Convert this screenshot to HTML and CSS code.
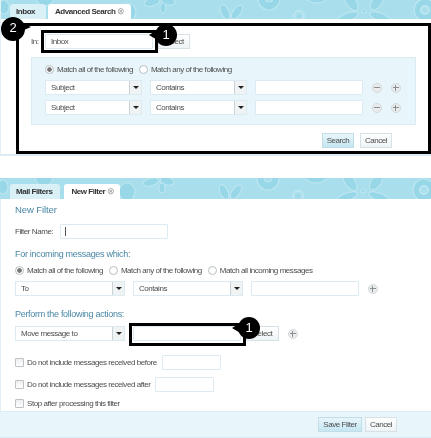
FILE: index.html
```html
<!DOCTYPE html>
<html lang="en">
<head>
    <meta charset="UTF-8">
    <meta name="viewport" content="width=device-width, initial-scale=1.0">
    <title>Advanced Search and New Filter</title>
    <link rel="stylesheet" href="styles.css">
</head>
<body>
    <svg class="defs" width="0" height="0">
        <defs>
            <g id="flowers" fill="#98d7e7" stroke="#bce6f0" stroke-width="1.2">
                <ellipse cx="3" cy="9" rx="5" ry="7" />
                <circle cx="44" cy="-1" r="9" />
                <ellipse cx="127" cy="14" rx="8" ry="9" />
                <ellipse cx="151" cy="4" rx="8" ry="4" transform="rotate(-15 151 4)" />
                <ellipse cx="167" cy="3" rx="7" ry="4" transform="rotate(15 167 3)" />
                <ellipse cx="162" cy="10" rx="3" ry="5" />
                <ellipse cx="224" cy="14" rx="4" ry="8" transform="rotate(-25 224 14)" />
                <ellipse cx="236" cy="14" rx="4" ry="8" transform="rotate(35 236 14)" />
                <circle cx="268" cy="1" r="11" />
                <circle cx="268" cy="0" r="4" fill="#a9deec" />
                <circle cx="298" cy="18" r="5" fill="none" stroke-width="2" />
                <circle cx="298" cy="18" r="1.5" stroke="none" />
                <ellipse cx="316" cy="-2" rx="11" ry="7" />
                <ellipse cx="350" cy="4" rx="5" ry="10" transform="rotate(-35 350 4)" />
                <ellipse cx="376" cy="4" rx="5" ry="9" transform="rotate(35 376 4)" />
                <ellipse cx="347" cy="19" rx="11" ry="4" transform="rotate(-20 347 19)" />
                <ellipse cx="379" cy="19" rx="11" ry="4" transform="rotate(20 379 19)" />
                <circle cx="363" cy="13" r="2" />
                <circle cx="424" cy="12" r="11" />
                <circle cx="424" cy="12" r="4" fill="#a9deec" stroke-width="2" />
            </g>
        </defs>
    </svg>

    <section class="panel panel-search">
        <div class="tabbar">
            <svg class="flowers" width="431" height="21"><use href="#flowers" /></svg>
            <div class="tab tab-inbox">Inbox</div>
            <div class="tab active">Advanced Search <span class="tab-close">&#8855;</span></div>
        </div>
        <div class="search-body">
            <div class="row folder-row">
                <label class="in-label">In:</label>
                <div class="field field-folder">Inbox</div>
                <button class="btn">Select</button>
            </div>
            <div class="match-box">
                <div class="row radios">
                    <span class="radio on"></span><span>Match all of the following</span>
                    <span class="radio"></span><span>Match any of the following</span>
                </div>
                <div class="row cond">
                    <div class="select sel-sm"><span>Subject</span><i></i></div>
                    <div class="select sel-sm"><span>Contains</span><i></i></div>
                    <div class="field field-value"></div>
                    <span class="round minus"></span>
                    <span class="round plus"></span>
                </div>
                <div class="row cond">
                    <div class="select sel-sm"><span>Subject</span><i></i></div>
                    <div class="select sel-sm"><span>Contains</span><i></i></div>
                    <div class="field field-value"></div>
                    <span class="round minus"></span>
                    <span class="round plus"></span>
                </div>
            </div>
            <div class="row actions">
                <button class="btn primary">Search</button>
                <button class="btn">Cancel</button>
            </div>
        </div>

        <!-- annotations -->
        <div class="mark mark-all"></div>
        <div class="mark mark-in"></div>
        <div class="callout callout-2">2</div>
        <div class="callout callout-1a">1</div>
    </section>

    <section class="panel panel-filter">
        <div class="tabbar">
            <svg class="flowers" width="431" height="21"><use href="#flowers" /></svg>
            <div class="tab">Mail Filters</div>
            <div class="tab active">New Filter <span class="tab-close">&#8855;</span></div>
        </div>
        <div class="filter-body">
            <h3>New Filter</h3>
            <div class="row name-row">
                <label>Filter Name:</label>
                <div class="field field-name"><b class="caret"></b></div>
            </div>
            <h4>For incoming messages which:</h4>
            <div class="row radios">
                <span class="radio on"></span><span>Match all of the following</span>
                <span class="radio"></span><span>Match any of the following</span>
                <span class="radio"></span><span>Match all incoming messages</span>
            </div>
            <div class="row cond">
                <div class="select sel-lg"><span>To</span><i></i></div>
                <div class="select sel-lg"><span>Contains</span><i></i></div>
                <div class="field field-value"></div>
                <span class="round plus"></span>
            </div>
            <h4 class="perform">Perform the following actions:</h4>
            <div class="row cond action-row">
                <div class="select sel-lg"><span>Move message to</span><i></i></div>
                <div class="field field-value"></div>
                <button class="btn btn-select">Select</button>
                <span class="round plus"></span>
            </div>
            <div class="row check-row first">
                <span class="check"></span><span>Do not include messages received before</span>
                <div class="field field-date"></div>
            </div>
            <div class="row check-row">
                <span class="check"></span><span>Do not include messages received after</span>
                <div class="field field-date"></div>
            </div>
            <div class="row check-row last">
                <span class="check"></span><span>Stop after processing this filter</span>
            </div>
        </div>
        <div class="footer">
            <button class="btn primary btn-save">Save Filter</button>
            <button class="btn">Cancel</button>
        </div>

        <!-- annotations -->
        <div class="mark mark-move"></div>
        <div class="callout callout-1b">1</div>
    </section>
</body>
</html>
```

FILE: styles.css
```css
* {
    margin: 0;
    padding: 0;
    box-sizing: border-box;
}

html {
    background: #fff;
}

/* the reference is a scaled down capture, so everything is a little soft */
body {
    width: 431px;
    height: 438px;
    overflow: hidden;
    background: #fff;
    font-family: "Liberation Sans", Arial, sans-serif;
    font-size: 8px;
    letter-spacing: -0.45px;
    color: #4d4d4d;
    filter: blur(0.3px);
}

.defs {
    position: absolute;
}

.panel {
    position: relative;
}

.panel-search {
    height: 156px;
    border-bottom: 2px solid #dcecf2;
    border-left: 1px solid #e3f1f6;
}

.panel-filter {
    margin-top: 22px;
    height: 260px;
}

.row {
    display: flex;
    align-items: center;
}

/* tabs */
.tabbar {
    position: relative;
    display: flex;
    align-items: flex-end;
    gap: 4px;
    height: 21px;
    padding-left: 10px;
    background: #a9deec;
    overflow: hidden;
}

.panel-search .tabbar {
    height: 19px;
    padding-left: 9px;
    gap: 2px;
}

.flowers {
    position: absolute;
    top: 0;
    left: 0;
}

.panel-search .flowers {
    top: -2px;
}

.tab {
    position: relative;
    height: 15px;
    padding: 0 8px 0 6px;
    line-height: 15px;
    font-weight: bold;
    color: #333;
    background: #d8f0f6;
    border-radius: 3px 3px 0 0;
}

.tab-inbox {
    width: 36px;
}

.tab.active {
    padding: 0 6px 0 7px;
    background: #fff;
}

.tab-close {
    font-size: 9px;
    font-weight: normal;
    color: #999;
}

/* inputs */
.field {
    height: 15px;
    padding-left: 5px;
    line-height: 13px;
    background: #fff;
    border: 1px solid #dcebf1;
    border-radius: 1px;
}

.field-folder {
    width: 108px;
}

.field-value {
    width: 108px;
}

.field-name {
    width: 108px;
    padding-left: 4px;
}

.field-date {
    width: 59px;
}

.caret {
    display: block;
    width: 1px;
    height: 9px;
    margin-top: 2px;
    background: #555;
}

.select {
    display: flex;
    justify-content: space-between;
    height: 15px;
    background: #fff;
    border: 1px solid #dcebf1;
    line-height: 13px;
}

.select span {
    padding-left: 5px;
}

.select i {
    position: relative;
    width: 12px;
    background: #f0f3f4;
    border-left: 1px solid #c9d2d6;
}

.select i::after {
    content: "";
    position: absolute;
    top: 5px;
    left: 3px;
    border: 3px solid transparent;
    border-top: 3px solid #222;
    border-bottom: 0;
}

.sel-sm {
    width: 97px;
}

.sel-lg {
    width: 110px;
}

.btn {
    width: 32px;
    height: 15px;
    font: 8px "Liberation Sans", Arial, sans-serif;
    letter-spacing: -0.45px;
    color: #4d4d4d;
    background: linear-gradient(#fff, #eef4f6);
    border: 1px solid #d8e2e6;
}

.btn.primary {
    background: linear-gradient(#e9f6fb, #c4e6f2);
    border-color: #c3dde7;
}

.btn-save {
    width: 44px;
}

.radio {
    width: 9px;
    height: 9px;
    margin-right: 3px;
    border: 1px solid #b7bec1;
    border-radius: 50%;
    background: #fff;
}

.radio.on {
    background: radial-gradient(circle, #777 0 2px, #fff 2.5px);
}

.radios > span:nth-child(n+3).radio {
    margin-left: 6px;
}

.check {
    width: 9px;
    height: 9px;
    margin-right: 3px;
    background: linear-gradient(#eee, #fff);
    border: 1px solid #bcc2c5;
    border-radius: 1px;
}

.round {
    position: relative;
    width: 10px;
    height: 10px;
    border: 1px solid #d6d9db;
    border-radius: 50%;
    background: #e9ebec;
}

.round::before,
.plus::after {
    content: "";
    position: absolute;
    top: 3px;
    left: 1px;
    width: 6px;
    height: 1px;
    background: #8a8f92;
}

.plus::after {
    top: 1px;
    left: 3px;
    width: 1px;
    height: 6px;
}

/* advanced search */
.search-body {
    padding: 15px 15px 0 30px;
}

.in-label {
    width: 14px;
}

.folder-row .btn {
    margin-left: 5px;
}

.match-box {
    margin-top: 8px;
    height: 68px;
    padding: 7px 13px;
    background: #e8f5fb;
    border: 1px solid #d9ecf3;
}

.match-box .cond {
    margin-top: 5px;
}

.match-box .radios {
    height: 9px;
    margin-bottom: 6px;
}

.match-box .select {
    margin-right: 8px;
}

.match-box .field-value {
    margin-right: 9px;
}

.match-box .minus {
    margin-right: 9px;
}

.actions {
    justify-content: flex-end;
    gap: 6px;
    margin-top: 8px;
    padding-right: 24px;
}

/* new filter */
.filter-body {
    height: 212px;
    padding: 5px 0 0 15px;
    box-shadow: inset 1px 0 0 #e3f1f6;
}

h3 {
    font-size: 9.5px;
    letter-spacing: -0.1px;
    line-height: 12px;
    color: #4a87a6;
    font-weight: normal;
}

h4 {
    margin-top: 9px;
    font-size: 9px;
    letter-spacing: -0.3px;
    line-height: 12px;
    color: #4a87a6;
    font-weight: normal;
}

.name-row {
    margin-top: 8px;
}

.name-row label {
    width: 45px;
}

.filter-body > .radios {
    margin-top: 6px;
}

.filter-body .cond {
    margin-top: 6px;
}

.filter-body .select {
    margin-right: 8px;
}

.filter-body .field-value {
    margin-right: 9px;
}

.perform {
    margin-top: 12px;
}

.action-row .field-value {
    margin-right: 5px;
}

.action-row .plus {
    margin-left: 9px;
}

.btn-select {
    width: 33px;
}

.check-row {
    margin-top: 7px;
}

.check-row.first {
    margin-top: 14px;
}

.check-row .field {
    margin-left: 5px;
}

.check-row.last {
    margin-top: 7px;
}

.footer {
    display: flex;
    justify-content: flex-end;
    align-items: center;
    gap: 3px;
    height: 27px;
    padding-right: 34px;
    background: #e8f5fb;
    border-top: 1px solid #d9ecf3;
    border-bottom: 1px solid #d9ecf3;
}

/* black annotation boxes and callouts */
.mark {
    position: absolute;
    border: 3px solid #000;
}

.mark-all {
    top: 23px;
    left: 15px;
    width: 415px;
    height: 131px;
}

.mark-in {
    top: 30px;
    left: 40px;
    width: 117px;
    height: 23px;
}

.mark-move {
    top: 145px;
    left: 129px;
    width: 117px;
    height: 23px;
}

.callout {
    position: absolute;
    width: 22px;
    height: 22px;
    border-radius: 50%;
    background: #000;
    color: #fff;
    font-size: 13px;
    letter-spacing: 0;
    line-height: 22px;
    text-align: center;
}

.callout::before {
    content: "";
    position: absolute;
    top: 5px;
    left: -6px;
    border-style: solid;
    border-width: 6px 10px 6px 0;
    border-color: transparent #000 transparent transparent;
}

.callout-1a {
    top: 24px;
    left: 154px;
}

.callout-1b {
    top: 139px;
    left: 238px;
}

.callout-2 {
    top: 17px;
    left: 0;
    width: 24px;
    height: 24px;
    line-height: 22px;
}

.callout-2::before {
    top: 5px;
    left: 18px;
    border-width: 5px 0 5px 12px;
    border-color: transparent transparent transparent #000;
}
```
